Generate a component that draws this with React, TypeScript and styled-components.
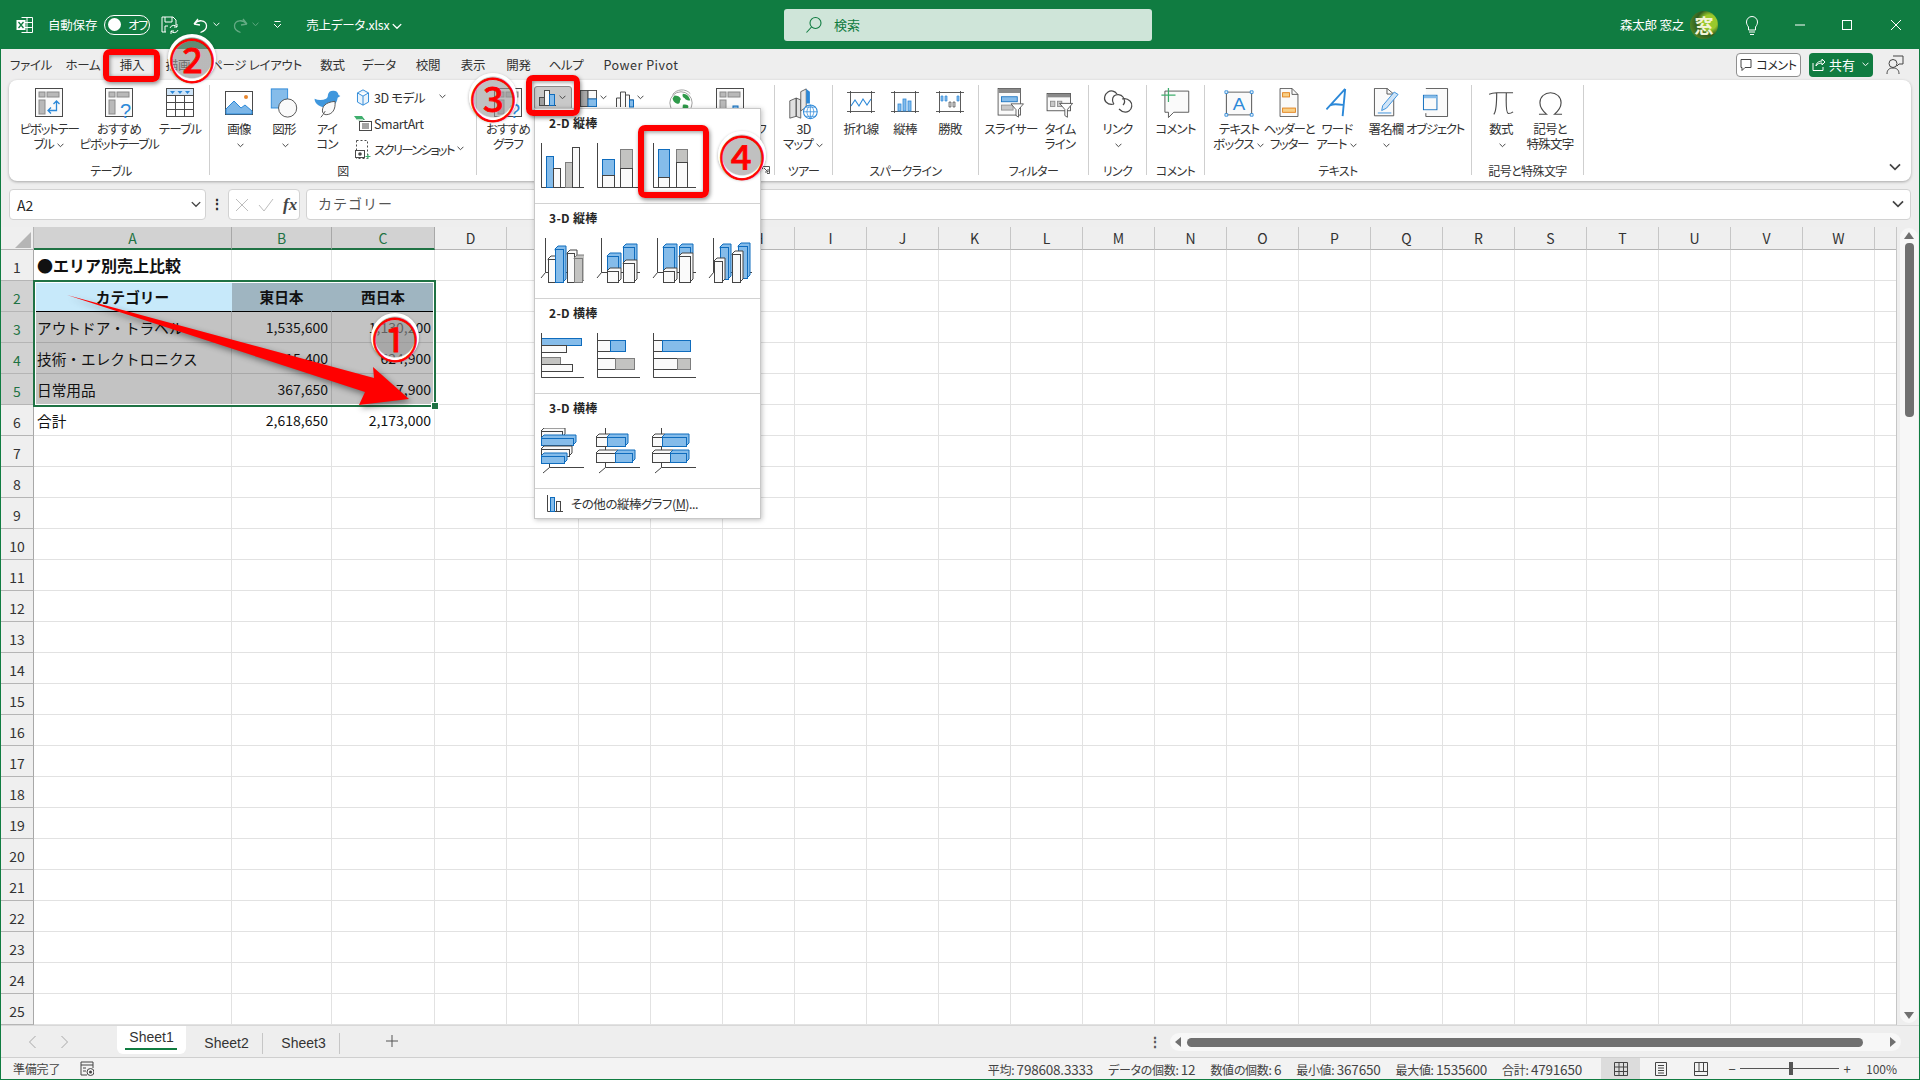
import * as React from 'react'
import styled, { createGlobalStyle } from 'styled-components'

const GlobalStyle = createGlobalStyle`
  html, body { margin: 0; padding: 0; background: #fff; }
  body { font-family: "Noto Sans CJK JP", "Noto Sans", sans-serif; color: #262626; }
`

const GREEN = '#107c41'

// ---------- small shared drawings ----------
const Chev = ({ c = '#444', w = 7 }: { c?: string; w?: number }) => (
  <ChevSvg width={w} height={w * 0.7} viewBox="0 0 7 5">
    <polyline points="0.5,0.8 3.5,3.8 6.5,0.8" fill="none" stroke={c} strokeWidth="1" />
  </ChevSvg>
)
const ChevSvg = styled.svg`
  display: inline-block;
  vertical-align: middle;
  margin: 0 1px 1px 3px;
`

const BLUE = '#2b88d8'
const INK = '#4a4a4a'

const PivotBase = ({ children }: { children?: React.ReactNode }) => (
  <svg width="30" height="30" viewBox="0 0 30 30">
    <rect x="1.5" y="0.5" width="27" height="28" fill="#fafafa" stroke={INK} />
    <rect x="5" y="4" width="6" height="5" fill="#b9b9b9" stroke="#8a8a8a" />
    <rect x="13" y="4" width="12" height="5" fill="#b9b9b9" stroke="#8a8a8a" />
    <rect x="5" y="12" width="6" height="14" fill="#b9b9b9" stroke="#8a8a8a" />
    {children}
  </svg>
)

const PivotIcon = () => (
  <PivotBase>
    <path d="M14 22.5h8.5V13M19.5 16l3-3 3 3M17 19.5l-3 3 3 3" fill="none" stroke={BLUE} strokeWidth="1.3" />
  </PivotBase>
)
const RecPivotIcon = () => (
  <PivotBase>
    <text x="16" y="30" fontSize="20" fill={BLUE} fontFamily="Liberation Sans">?</text>
  </PivotBase>
)
const TableIcon = () => (
  <svg width="30" height="30" viewBox="0 0 30 30">
    <rect x="1.5" y="0.5" width="27" height="28" fill="#fff" stroke={INK} />
    <rect x="2" y="1" width="26" height="6" fill="#cfe4f7" />
    <path d="M5 3h5l-2.5 3zM12.5 3h5L15 6zM20 3h5l-2.5 3z" fill={BLUE} />
    <path d="M1.5 7.5h27M1.5 14.5h27M1.5 21.5h27M10.5 7v22M19.5 7v22" stroke={INK} fill="none" />
  </svg>
)
const ImageIcon = () => (
  <svg width="30" height="30" viewBox="0 0 30 30">
    <rect x="1.5" y="3.5" width="27" height="23" fill="#fff" stroke={INK} />
    <path d="M2 26V21L10 13l7 7 4-3 7 6v3z" fill="#7db7e8" stroke="#2b88d8" />
    <circle cx="22" cy="9" r="2" fill="#e8862e" />
  </svg>
)
const ShapesIcon = () => (
  <svg width="28" height="30" viewBox="0 0 30 33">
    <rect x="1" y="1" width="18" height="21" fill="#85bcea" stroke="#2b88d8" />
    <circle cx="19" cy="22" r="10" fill="#fafafa" stroke={INK} />
  </svg>
)
const DuckIcon = () => (
  <svg width="28" height="32" viewBox="0 0 30 36">
    <path d="M22 3a6 6 0 0 1 6 5l2 1-3 2c-1 7-6 11-12 11C8 22 1 18 1 12c4 2 9 2 13 0 2-1 2-3 2-4a6 6 0 0 1 6-5z" fill="#3f97dd" />
    <path d="M8 33c2-2 3-4 5-7M10 27c-1-6 3-11 14-12 1 9-3 15-10 15-2 0-3-1-4-3z" fill="#fafafa" stroke={INK} />
  </svg>
)
const CubeIcon = () => (
  <svg width="14" height="17" viewBox="0 0 16 20">
    <path d="M8 1l6.500 3.600v10.800L8 19l-6.500-3.600V4.600zM1.500 4.600L8 8.400l6.500-3.800M8 8.400V19" fill="#eaf4fc" stroke="#2b88d8" strokeWidth="1.100" />
  </svg>
)
const SmartArtIcon = () => (
  <svg width="18" height="16" viewBox="0 0 18 16">
    <path d="M0 1h8l3 4H3z" fill="#3fae6d" />
    <path d="M2 4h7v2H5z" fill="#bfe3cd" />
    <rect x="5.500" y="6.500" width="12" height="9" fill="#fff" stroke={INK} />
    <path d="M8 9h7M8 11h7M8 13h7" stroke={INK} />
  </svg>
)
const ScreenshotIcon = () => (
  <svg width="16" height="21" viewBox="0 0 16 21">
    <rect x="1.500" y="1.500" width="11" height="18" fill="none" stroke={INK} strokeDasharray="2 2" />
    <rect x="0.500" y="11.500" width="9" height="7" fill="#fff" stroke={INK} />
    <circle cx="5" cy="15" r="1.800" fill={INK} />
    <path d="M13 15v5M10.500 17.500h5" stroke="#3fae6d" />
  </svg>
)
const MiniCol = () => (
  <svg width="17" height="17" viewBox="0 0 17 17">
    <path d="M.5 16.500H17" stroke={INK} fill="none" />
    <rect x="0.500" y="8.500" width="5" height="8" fill="#9f9f9f" stroke={INK} />
    <rect x="5.500" y="1.500" width="5" height="15" fill="#fafafa" stroke={INK} />
    <rect x="10.500" y="5.500" width="5" height="11" fill="#85bcea" stroke="#0f6cbd" />
  </svg>
)
const HierarchyIcon = () => (
  <svg width="17" height="17" viewBox="0 0 18 18">
    <rect x="0.500" y="0.500" width="8" height="17" fill="#a8a8a8" stroke={INK} />
    <rect x="8.500" y="0.500" width="9" height="9" fill="#fafafa" stroke={INK} />
    <rect x="8.500" y="9.500" width="9" height="8" fill="#85bcea" stroke="#0f6cbd" />
  </svg>
)
const WaterfallIcon = () => (
  <svg width="18" height="20" viewBox="0 0 18 20">
    <path d="M.5 19V10h4V4h5v3h4v5h4v7M4.500 19v-9M9.500 19V7M13.500 19v-7" fill="#fafafa" stroke={INK} />
    <rect x="13.500" y="12" width="4" height="7" fill="#85bcea" stroke="#0f6cbd" />
  </svg>
)
const GlobeIcon = () => (
  <svg width="26" height="28" viewBox="0 0 28 30">
    <circle cx="14" cy="16" r="12" fill="#fff" stroke="#9a9a9a" />
    <path d="M7 8c3 0 6 1 7 4-2 1 0 4-3 5-3 0-6-3-6-6zM16 6c4 0 7 3 8 7-2 1-5 0-6-2-2-1-3-3-2-5zM16 18c3-1 6 0 6 2s-3 5-5 5-1-5-1-7z" fill="#2e9a4a" />
    <path d="M5 7C9 1 19 0 24 6" fill="none" stroke="#9a9a9a" />
  </svg>
)
const PivotChartIcon = () => (
  <svg width="30" height="34" viewBox="0 0 30 34">
    <rect x="0.500" y="0.500" width="27" height="26" fill="#fafafa" stroke={INK} />
    <rect x="4" y="4" width="6" height="5" fill="#b9b9b9" stroke="#8a8a8a" />
    <rect x="12" y="4" width="12" height="5" fill="#b9b9b9" stroke="#8a8a8a" />
    <rect x="4" y="12" width="6" height="12" fill="#b9b9b9" stroke="#8a8a8a" />
    <rect x="17" y="18" width="5" height="14" fill="#85bcea" stroke="#0f6cbd" />
  </svg>
)
const MapIcon = () => (
  <svg width="31" height="32" viewBox="0 0 32 35">
    <path d="M1 14l7-3v20l-7 2zM8 11l5 2v20l-5-2z" fill="#e0e0e0" stroke={INK} strokeWidth="0.900" />
    <path d="M13 4l6-3v20l-6 4z" fill="#e8e8e8" stroke={INK} strokeWidth="0.900" />
    <path d="M19 1l4 3v13h-4z" fill="#2b88d8" />
    <circle cx="23.500" cy="26" r="7.500" fill="#fff" stroke={BLUE} strokeWidth="1.100" />
    <path d="M16 26h15M23.500 18.500v15M18 21h11M18 31h11M23.500 18.500c-5 5-5 10 0 15M23.500 18.500c5 5 5 10 0 15" fill="none" stroke={BLUE} strokeWidth="0.800" />
  </svg>
)
const SparkBase = ({ children }: { children: React.ReactNode }) => (
  <SparkSvg width="30" height="22" viewBox="0 0 30 22">
    <path d="M1 1.500h28M1 20.500h28M4.500 0v22M25.500 0v22" stroke={INK} fill="none" strokeWidth="0.900" />
    {children}
  </SparkSvg>
)
const SparkSvg = styled.svg`
  margin-top: 3px;
`
const SparkLineIcon = () => (
  <SparkBase>
    <polyline points="5,15 9,9 13,15 17,8 21,14 25,8" fill="none" stroke={BLUE} strokeWidth="1.100" />
  </SparkBase>
)
const SparkColIcon = () => (
  <SparkBase>
    <rect x="8" y="13" width="3" height="7" fill="#85bcea" stroke={BLUE} strokeWidth="0.800" />
    <rect x="13" y="8" width="3" height="12" fill="#85bcea" stroke={BLUE} strokeWidth="0.800" />
    <rect x="18" y="10" width="3" height="10" fill="#85bcea" stroke={BLUE} strokeWidth="0.800" />
  </SparkBase>
)
const SparkWinIcon = () => (
  <SparkBase>
    <path d="M6 5h2v5H6zM10 5h2v5h-2zM22 5h2v5h-2z" fill="#85bcea" stroke={BLUE} strokeWidth="0.700" />
    <path d="M14 11h2v5h-2zM18 11h2v5h-2z" fill="#ddd" stroke={INK} strokeWidth="0.700" />
  </SparkBase>
)
const SlicerIcon = () => (
  <svg width="30" height="30" viewBox="0 0 32 36">
    <rect x="0.500" y="0.500" width="27" height="32" fill="#fafafa" stroke={INK} />
    <rect x="1" y="1" width="26" height="5" fill="#8a8a8a" />
    <rect x="4.500" y="10.500" width="19" height="6" fill="#85bcea" stroke="#0f6cbd" />
    <rect x="4.500" y="20.500" width="14" height="6" fill="#c8c8c8" stroke="#8a8a8a" />
    <path d="M16 19h15l-6 7v9l-3-2v-7z" fill="#fff" stroke={INK} />
  </svg>
)
const TimelineIcon = () => (
  <TimelineSvg width="31" height="26" viewBox="0 0 32 30">
    <rect x="0.500" y="0.500" width="27" height="20" fill="#fafafa" stroke={INK} />
    <rect x="1" y="1" width="26" height="4" fill="#8a8a8a" />
    <rect x="4.500" y="9.500" width="5" height="6" fill="#c8c8c8" stroke="#8a8a8a" />
    <rect x="12.500" y="9.500" width="5" height="6" fill="#c8c8c8" stroke="#8a8a8a" />
    <path d="M15 12h15l-6 7v9l-3-2v-7z" fill="#fff" stroke={INK} />
  </TimelineSvg>
)
const TimelineSvg = styled.svg`
  margin-top: 5px;
`
const LinkIcon = () => (
  <svg width="30" height="28" viewBox="0 0 30 28">
    <path d="M14 6c-2-3-6-4-9-2S0 11 3 14c2 2 5 3 8 2M16 21c3 3 7 4 10 2s4-7 1-10c-2-2-5-3-8-2" fill="none" stroke={INK} strokeWidth="1.200" />
    <path d="M11 16c-2-2-2-6 0-8s7-2 9 1 2 6 0 8" fill="none" stroke={INK} strokeWidth="1.200" />
  </svg>
)
const CommentIcon = () => (
  <svg width="31" height="30" viewBox="0 0 32 34">
    <path d="M4 3.500h27v24H14l-6 6v-6H4z" fill="#fafafa" stroke={INK} />
    <path d="M8 0v16M0 8h16" stroke="#3fae6d" strokeWidth="1.400" />
  </svg>
)
const TextBoxIcon = () => (
  <TextBoxSvg width="30" height="27" viewBox="0 0 32 32" preserveAspectRatio="none">
    <rect x="2.500" y="2.500" width="27" height="27" fill="#fafafa" stroke={INK} />
    <path d="M1 1h3v3H1zM28 1h3v3h-3zM1 28h3v3H1zM28 28h3v3h-3z" fill="#fff" stroke={BLUE} />
    <text x="16" y="24" textAnchor="middle" fontSize="20" fill={BLUE} fontFamily="Liberation Sans">A</text>
  </TextBoxSvg>
)
const TextBoxSvg = styled.svg`
  margin-top: 2px;
`
const HeaderFooterIcon = () => (
  <svg width="22" height="29" viewBox="0 0 24 34">
    <path d="M1.500.5h14l7 7v26h-21z" fill="#fafafa" stroke={INK} />
    <path d="M15.500.5v7h7" fill="none" stroke={INK} />
    <rect x="4.500" y="5.500" width="8" height="5" fill="#f8cf86" stroke="#e07a10" />
    <rect x="4.500" y="23.500" width="15" height="5" fill="#f8cf86" stroke="#e07a10" />
  </svg>
)
const WordArtIcon = () => (
  <svg width="23" height="29" viewBox="0 0 26 34">
    <path d="M0 25L22 1M22 1l-3 32M5 20c4-2 9-1 15 0" fill="none" stroke={BLUE} strokeWidth="2.200" />
  </svg>
)
const SignatureIcon = () => (
  <svg width="27" height="29" viewBox="0 0 28 36" preserveAspectRatio="none">
    <path d="M1.500.5h13l7 7v27h-20z" fill="#fafafa" stroke={INK} />
    <path d="M14.500.5v7h7" fill="none" stroke={INK} />
    <path d="M22 5l4 3-12 17-5 3 1-6z" fill="#cfe4f7" stroke={BLUE} />
    <path d="M5 31h14" stroke={BLUE} />
  </svg>
)
const ObjectIcon = () => (
  <svg width="27" height="29" viewBox="0 0 28 34" preserveAspectRatio="none">
    <path d="M4 .5h22.500v33H4v-4" fill="#fafafa" stroke={INK} />
    <rect x="1.500" y="8.500" width="14" height="17" fill="#fafafa" stroke="#0f6cbd" />
    <rect x="2" y="9" width="13" height="3" fill="#85bcea" />
  </svg>
)
const PiIcon = () => (
  <PiSvg width="25" height="25" viewBox="0 0 26 30" preserveAspectRatio="none">
    <path d="M0 4c3-2 5-2 8-2h17M8 2C8 14 8 24 5 28M18 2c0 8-1 24 2 25 2 0 4-1 5-2" fill="none" stroke={INK} strokeWidth="1.200" />
  </PiSvg>
)
const PiSvg = styled.svg`
  margin-top: 3px;
`
const OmegaIcon = () => (
  <PiSvg width="25" height="25" viewBox="0 0 26 30" preserveAspectRatio="none">
    <path d="M1 28h8c-4-4-7-8-7-14C2 7 7 2 13 2s11 5 11 12c0 6-3 10-7 14h8" fill="none" stroke={INK} strokeWidth="1.200" />
  </PiSvg>
)

// ---------- chart gallery drawings ----------
type Kind = 'b' | 'w' | 'g'
type BarDef = [number, number, number, number, Kind]
const PAL: Record<Kind, { fill: string; stroke: string }> = {
  b: { fill: '#85bcea', stroke: '#0f6cbd' },
  w: { fill: '#fafafa', stroke: '#444' },
  g: { fill: '#c3c3c1', stroke: '#7d7d7d' },
}
const Bar = ({ bar, deep }: { bar: BarDef; deep?: boolean }) => {
  const [x, y, w, h, k] = bar
  const { fill, stroke } = PAL[k]
  const d = 3
  return (
    <g fill={fill} stroke={stroke}>
      {deep && <path d={`M${x} ${y}l${d} -${d}h${w}v${h}l-${d} ${d}z`} />}
      <rect x={x + 0.5} y={y + 0.5} width={w} height={h} />
    </g>
  )
}
const ChartIcon = ({ bars, mode }: { bars: BarDef[]; mode: '2d' | '3dv' | '3dh' }) => (
  <svg width="44" height="46" viewBox="0 0 44 46">
    {mode === '2d' && <path d="M1.500 0v44.500H44" fill="none" stroke="#444" />}
    {mode === '3dv' && <path d="M5.500 0v34.500H44M5.500 34.500L1 40" fill="none" stroke="#444" />}
    {mode === '3dh' && <path d="M9.500 0v39.500H44M9.500 39.500L3 45" fill="none" stroke="#444" />}
    {bars.map((b, i) => <Bar key={i} bar={b} deep={mode !== '2d'} />)}
    {mode === '2d' && <path d="M1.500 0v44.500" fill="none" stroke="#444" />}
  </svg>
)
const GALLERY: { title: string; mode: '2d' | '3dv' | '3dh'; icons: BarDef[][] }[] = [
  {
    title: '2-D 縦棒', mode: '2d', icons: [
      [[6, 13, 7, 31, 'b'], [13, 25, 7, 19, 'w'], [25, 19, 7, 25, 'g'], [32, 4, 7, 40, 'w']],
      [[6, 16, 12, 16, 'b'], [6, 32, 12, 12, 'w'], [24, 6, 12, 19, 'g'], [24, 25, 12, 19, 'w']],
      [[6, 6, 11, 28, 'b'], [6, 34, 11, 10, 'w'], [24, 6, 11, 13, 'g'], [24, 19, 11, 25, 'w']],
    ],
  },
  {
    title: '3-D 縦棒', mode: '3dv', icons: [
      [[8, 21, 7, 23, 'w'], [15, 11, 8, 33, 'b'], [27, 15, 7, 29, 'w'], [34, 20, 8, 24, 'g']],
      [[11, 18, 11, 15, 'b'], [11, 33, 11, 11, 'w'], [27, 9, 11, 16, 'b'], [27, 25, 11, 19, 'w']],
      [[11, 9, 11, 24, 'b'], [11, 33, 11, 11, 'w'], [27, 9, 11, 9, 'b'], [27, 18, 11, 26, 'w']],
      [[12, 9, 8, 32, 'b'], [6, 23, 8, 21, 'w'], [30, 8, 9, 32, 'b'], [24, 16, 8, 28, 'w']],
    ],
  },
  {
    title: '2-D 横棒', mode: '2d', icons: [
      [[1, 5, 40, 7, 'b'], [1, 12, 25, 7, 'w'], [1, 24, 19, 7, 'g'], [1, 31, 31, 7, 'w']],
      [[1, 7, 13, 11, 'w'], [14, 7, 15, 11, 'b'], [1, 25, 18, 11, 'w'], [19, 25, 19, 11, 'g']],
      [[1, 7, 9, 11, 'w'], [10, 7, 28, 11, 'b'], [1, 25, 24, 11, 'w'], [25, 25, 13, 11, 'g']],
    ],
  },
  {
    title: '3-D 横棒', mode: '3dh', icons: [
      [[1, 3, 21, 6, 'w'], [1, 10, 32, 7, 'b'], [1, 21, 28, 7, 'w'], [1, 28, 23, 7, 'b']],
      [[0, 9, 11, 9, 'w'], [11, 9, 18, 9, 'b'], [0, 25, 19, 9, 'w'], [19, 25, 17, 9, 'b']],
      [[0, 9, 10, 9, 'w'], [10, 9, 24, 9, 'b'], [0, 25, 18, 9, 'w'], [18, 25, 16, 9, 'b']],
    ],
  },
]

// ---------- sheet data ----------
const COLS = ['A', 'B', 'C', 'D', 'E', 'F', 'G', 'H', 'I', 'J', 'K', 'L', 'M', 'N', 'O', 'P', 'Q', 'R', 'S', 'T', 'U', 'V', 'W', '']
type CellDef = { t: string; right?: boolean; center?: boolean; bold?: boolean; big?: boolean }
const DATA: Record<string, CellDef> = {
  A1: { t: '●エリア別売上比較', bold: true, big: true },
  A2: { t: 'カテゴリー', center: true, bold: true },
  B2: { t: '東日本', center: true, bold: true },
  C2: { t: '西日本', center: true, bold: true },
  A3: { t: 'アウトドア・トラベル' },
  B3: { t: '1,535,600', right: true },
  C3: { t: '1,130,200', right: true },
  A4: { t: '技術・エレクトロニクス' },
  B4: { t: '715,400', right: true },
  C4: { t: '624,900', right: true },
  A5: { t: '日常用品' },
  B5: { t: '367,650', right: true },
  C5: { t: '417,900', right: true },
  A6: { t: '合計' },
  B6: { t: '2,618,650', right: true },
  C6: { t: '2,173,000', right: true },
}
const cellTone = (r: number, c: number) => {
  if (r === 2 && c === 0) return 'head'
  if (r === 2 && c <= 2) return 'headDark'
  if (r >= 3 && r <= 5 && c <= 2) return 'sel'
  return 'none'
}

const STATUS: [string, string][] = [
  ['平均:', '798608.3333'],
  ['データの個数:', '12'],
  ['数値の個数:', '6'],
  ['最小値:', '367650'],
  ['最大値:', '1535600'],
  ['合計:', '4791650'],
]

export default function App() {
  return (
    <Root>
      <GlobalStyle />
      <TitleBar>
        <TitleLeft>
          <svg width="18" height="18" viewBox="0 0 18 18">
            <path d="M5.500 1.500h11v15h-11M5.500 6.500h11M5.500 11.500h11M11 1.500v15" fill="none" stroke="#fff" />
            <rect x="0.500" y="4" width="9" height="10" fill="#fff" />
            <path d="M2.500 6l5 6M7.500 6l-5 6" stroke={GREEN} strokeWidth="1.300" />
          </svg>
          <TitleText $ml={14}>自動保存</TitleText>
          <Toggle><Knob /><ToggleText>オフ</ToggleText></Toggle>
          <QuickIcon $ml={10}>
            <svg width="20" height="20" viewBox="0 0 20 20">
              <path d="M6 17H2V2h11l3 3v5M5 2v5h7V2M5 17v-6h3" fill="none" stroke="#fff" />
              <path d="M10 13a4 4 0 0 1 7-1M18 15a4 4 0 0 1-7 1M17 9v3h-3M11 19v-3h3" fill="none" stroke="#fff" />
            </svg>
          </QuickIcon>
          <QuickIcon $ml={12}>
            <svg width="18" height="18" viewBox="0 0 18 18">
              <path d="M2 8l4-5M2 8l6 1M2.500 8C6 3 14 4 14.500 9.500c.3 3-2 5.500-6 7" fill="none" stroke="#fff" strokeWidth="1.300" />
            </svg>
            <Chev c="#fff" />
          </QuickIcon>
          <QuickIcon $ml={10} $dim>
            <svg width="18" height="18" viewBox="0 0 18 18">
              <path d="M16 8l-4-5M16 8l-6 1M15.500 8C12 3 4 4 3.500 9.500c-.3 3 2 5.500 6 7" fill="none" stroke="#fff" strokeWidth="1.300" />
            </svg>
            <Chev c="#fff" />
          </QuickIcon>
          <QuickIcon $ml={13}>
            <svg width="9" height="9" viewBox="0 0 9 9">
              <path d="M1.500 1.500h6M1 4l3.500 3.500L8 4" fill="none" stroke="#fff" />
            </svg>
          </QuickIcon>
          <TitleText $ml={24}>売上データ.xlsx<Chev c="#fff" w={10} /></TitleText>
        </TitleLeft>
        <SearchBox>
          <svg width="18" height="18" viewBox="0 0 18 18">
            <circle cx="10.500" cy="7" r="5.500" fill="none" stroke={GREEN} strokeWidth="1.100" />
            <path d="M6.500 11l-5 5.500" stroke={GREEN} strokeWidth="1.100" />
          </svg>
          <SearchText>検索</SearchText>
        </SearchBox>
        <TitleRight>
          <TitleText>森太郎 窓之</TitleText>
          <Avatar>窓</Avatar>
          <WinBtn $w={49} $ml={9}>
            <svg width="16" height="22" viewBox="0 0 16 22">
              <path d="M4.500 13C3 11 2.500 9.500 2.500 8a5.500 5.500 0 0 1 11 0c0 1.500-.5 3-2 5v3h-7zM5 18h6M6 20.500h4" fill="none" stroke="#fff" />
            </svg>
          </WinBtn>
          <WinBtn $w={47} $ml={0}><svg width="12" height="12" viewBox="0 0 12 12"><path d="M1 6h10" stroke="#fff" /></svg></WinBtn>
          <WinBtn $w={48} $ml={0}><svg width="12" height="12" viewBox="0 0 12 12"><rect x="1.500" y="1.500" width="9" height="9" fill="none" stroke="#fff" /></svg></WinBtn>
          <WinBtn $w={49} $ml={0}><svg width="12" height="12" viewBox="0 0 12 12"><path d="M1 1l10 10M11 1L1 11" stroke="#fff" /></svg></WinBtn>
        </TitleRight>
      </TitleBar>

      <TabRow>
        <Tab $w={56}>ファイル</Tab>
        <Tab $w={48}>ホーム</Tab>
        <Tab $w={50}>挿入</Tab>
        <Tab $w={42}>描画</Tab>
        <Tab $w={114}>ページ レイアウト</Tab>
        <Tab $w={39}>数式</Tab>
        <Tab $w={54}>データ</Tab>
        <Tab $w={44}>校閲</Tab>
        <Tab $w={46}>表示</Tab>
        <Tab $w={45}>開発</Tab>
        <Tab $w={50}>ヘルプ</Tab>
        <Tab $w={100} $ls={0.5}>Power Pivot</Tab>
        <TabRight>
          <CommentBtn>
            <svg width="12" height="12" viewBox="0 0 12 12"><path d="M1 .5h10v8H5l-3 3v-3H1z" fill="none" stroke="#444" /></svg>
            コメント
          </CommentBtn>
          <ShareBtn>
            <svg width="13" height="13" viewBox="0 0 13 13"><path d="M1 5v7.500h10V9M4 8c0-3 3-5 6-5V1l3 3-3 3V5C7 5 5 6 4 8z" fill="none" stroke="#fff" /></svg>
            共有<Chev c="#fff" />
          </ShareBtn>
          <svg width="18" height="20" viewBox="0 0 18 20">
            <circle cx="7" cy="8.500" r="4" fill="none" stroke="#444" />
            <path d="M1 19c0-4 2-6 6-6s6 2 6 6M7 1h10v8h-4l-2 2" fill="none" stroke="#444" />
          </svg>
        </TabRight>
      </TabRow>

      <Ribbon>
        <Group $w={201}>
          <GroupItems $pl={5}>
            <Large $w={70}><IconBox><PivotIcon /></IconBox><BtnText $tight>ピボットテー<br />ブル<Chev /></BtnText></Large>
            <Large $w={70}><IconBox><RecPivotIcon /></IconBox><BtnText>おすすめ<br /><Squeeze>ピボットテーブル</Squeeze></BtnText></Large>
            <Large $w={52}><IconBox><TableIcon /></IconBox><BtnText>テーブル</BtnText></Large>
          </GroupItems>
          <GroupLabel $pl={4}>テーブル</GroupLabel>
        </Group>
        <Group $w={267}>
          <GroupItems $pl={7}>
            <Large $w={44}><IconBox><ImageIcon /></IconBox><BtnText>画像<br /><Chev /></BtnText></Large>
            <Large $w={46}><IconBox><ShapesIcon /></IconBox><BtnText>図形<br /><Chev /></BtnText></Large>
            <Large $w={40}><IconBox><DuckIcon /></IconBox><BtnText>アイ<br />コン</BtnText></Large>
            <SmallCol>
              <SmallItem><SmallIcon><CubeIcon /></SmallIcon>3D モデル<Gap /><Chev /></SmallItem>
              <SmallItem><SmallIcon><SmartArtIcon /></SmallIcon>SmartArt</SmallItem>
              <SmallItem $ls={-1.8}><SmallIcon><ScreenshotIcon /></SmallIcon>スクリーンショット<Chev /></SmallItem>
            </SmallCol>
          </GroupItems>
          <GroupLabel>図</GroupLabel>
        </Group>
        <Group $w={298}>
          <GroupItems $pl={4}>
            <Large $w={54}><IconBox><RecPivotIcon /></IconBox><BtnText>おすすめ<br />グラフ</BtnText></Large>
            <ChartRow>
              <ActiveChart><MiniCol /><Chev /></ActiveChart>
              <ChartChip><HierarchyIcon /><Chev /></ChartChip>
              <ChartChip><WaterfallIcon /><Chev /></ChartChip>
            </ChartRow>
            <Large $w={36}><IconBox><GlobeIcon /></IconBox><BtnText>マップ</BtnText></Large>
            <Large $w={64}><IconBox><PivotChartIcon /></IconBox><BtnText>ピボットグラフ</BtnText></Large>
          </GroupItems>
          <GroupLabel>グラフ</GroupLabel>
          <Launcher>
            <svg width="8" height="8" viewBox="0 0 8 8"><path d="M.5 3V.5H7.500V7.500H5M2 2l4 4M3 6h3V3" fill="none" stroke="#555" /></svg>
          </Launcher>
        </Group>
        <Group $w={58}>
          <GroupItems $pl={0}>
            <Large $w={57}><IconBox><MapIcon /></IconBox><BtnText>3D<br />マップ<Chev /></BtnText></Large>
          </GroupItems>
          <GroupLabel>ツアー</GroupLabel>
        </Group>
        <Group $w={146}>
          <GroupItems $pl={6}>
            <Large $w={44}><IconBox><SparkLineIcon /></IconBox><BtnText>折れ線</BtnText></Large>
            <Large $w={44}><IconBox><SparkColIcon /></IconBox><BtnText>縦棒</BtnText></Large>
            <Large $w={46}><IconBox><SparkWinIcon /></IconBox><BtnText>勝敗</BtnText></Large>
          </GroupItems>
          <GroupLabel>スパークライン</GroupLabel>
        </Group>
        <Group $w={110}>
          <GroupItems $pl={6}>
            <Large $w={52}><IconBox><SlicerIcon /></IconBox><BtnText>スライサー</BtnText></Large>
            <Large $w={46}><IconBox><TimelineIcon /></IconBox><BtnText>タイム<br />ライン</BtnText></Large>
          </GroupItems>
          <GroupLabel>フィルター</GroupLabel>
        </Group>
        <Group $w={58}>
          <GroupItems $pl={0}>
            <Large $w={57}><IconBox><LinkIcon /></IconBox><BtnText>リンク<br /><Chev /></BtnText></Large>
          </GroupItems>
          <GroupLabel>リンク</GroupLabel>
        </Group>
        <Group $w={58}>
          <GroupItems $pl={0}>
            <Large $w={57}><IconBox><CommentIcon /></IconBox><BtnText>コメント</BtnText></Large>
          </GroupItems>
          <GroupLabel>コメント</GroupLabel>
        </Group>
        <Group $w={267}>
          <GroupItems $pl={9}>
            <Large $w={50}><IconBox><TextBoxIcon /></IconBox><BtnText>テキスト<br />ボックス<Chev /></BtnText></Large>
            <Large $w={50}><IconBox><HeaderFooterIcon /></IconBox><BtnText $tight>ヘッダーと<br />フッター</BtnText></Large>
            <Large $w={46}><IconBox><WordArtIcon /></IconBox><BtnText>ワード<br />アート<Chev /></BtnText></Large>
            <Large $w={52}><IconBox><SignatureIcon /></IconBox><BtnText>署名欄<br /><Chev /></BtnText></Large>
            <Large $w={46}><IconBox><ObjectIcon /></IconBox><BtnText $tight>オブジェクト</BtnText></Large>
          </GroupItems>
          <GroupLabel>テキスト</GroupLabel>
        </Group>
        <Group $w={112}>
          <GroupItems $pl={6}>
            <Large $w={46}><IconBox><PiIcon /></IconBox><BtnText>数式<br /><Chev /></BtnText></Large>
            <Large $w={52}><IconBox><OmegaIcon /></IconBox><BtnText>記号と<br />特殊文字</BtnText></Large>
          </GroupItems>
          <GroupLabel>記号と特殊文字</GroupLabel>
        </Group>
        <Collapse><Chev w={12} /></Collapse>
      </Ribbon>

      <FormulaRow>
        <NameBox>A2<Chev w={10} /></NameBox>
        <Dots>⋮</Dots>
        <FxBox>
          <svg width="14" height="14" viewBox="0 0 14 14"><path d="M1 1l12 12M13 1L1 13" stroke="#bdbdbd" /></svg>
          <svg width="16" height="14" viewBox="0 0 16 14"><path d="M1 7l5 6L15 1" fill="none" stroke="#bdbdbd" /></svg>
          <FxText>fx</FxText>
        </FxBox>
        <FormulaInput><FormulaText>カテゴリー</FormulaText><FormulaChev><Chev w={12} /></FormulaChev></FormulaInput>
      </FormulaRow>

      <SheetArea>
        <GridWrap>
          <Grid>
            <Corner><svg width="16" height="16" viewBox="0 0 16 16"><path d="M16 0v16H0z" fill="#b5b5b5" /></svg></Corner>
            {COLS.map((c, i) => <ColHead key={c + i} $sel={i <= 2}>{c}</ColHead>)}
            {Array.from({ length: 25 }, (_, ri) => {
              const r = ri + 1
              return (
                <React.Fragment key={r}>
                  <RowHead $sel={r >= 2 && r <= 5}>{r}</RowHead>
                  {COLS.map((c, ci) => {
                    const d = DATA[c + r]
                    return (
                      <Cell key={ci} $tone={cellTone(r, ci)} $right={d?.right} $center={d?.center} $bold={d?.bold} $big={d?.big}>
                        {d?.t}
                      </Cell>
                    )
                  })}
                </React.Fragment>
              )
            })}
          </Grid>
          <Selection><Handle /></Selection>
        </GridWrap>
        <VScroll>
          <VTrack>
            <ScrollUp />
            <VThumb />
            <ScrollGap />
            <ScrollDown />
          </VTrack>
        </VScroll>
      </SheetArea>

      <SheetTabs>
        <NavArrows>
          <svg width="9" height="14" viewBox="0 0 9 14"><path d="M7.500 1l-6 6 6 6" fill="none" stroke="#a8a8a8" /></svg>
          <svg width="9" height="14" viewBox="0 0 9 14"><path d="M1.500 1l6 6-6 6" fill="none" stroke="#a8a8a8" /></svg>
        </NavArrows>
        <ActiveSheet>Sheet1</ActiveSheet>
        <SheetName>Sheet2</SheetName>
        <SheetName>Sheet3</SheetName>
        <AddSheet>
          <svg width="12" height="12" viewBox="0 0 12 12"><path d="M6 0v12M0 6h12" stroke="#555" /></svg>
        </AddSheet>
        <HScrollDots>⋮</HScrollDots>
        <HScroll>
          <ArrowLeft />
          <HThumb />
          <ArrowRight />
        </HScroll>
      </SheetTabs>

      <StatusBar>
        <StatusLeft>準備完了</StatusLeft>
        <svg width="14" height="15" viewBox="0 0 14 15">
          <path d="M13 7V1H1v13h6M1 4h12M3 7h3M3 10h3" fill="none" stroke="#444" />
          <circle cx="10.500" cy="11" r="3.500" fill="none" stroke="#444" />
          <circle cx="10.500" cy="11" r="1.500" fill="#444" />
        </svg>
        <StatusStats>
          {STATUS.map(([k, v]) => <Stat key={k}>{k} <StatValue>{v}</StatValue></Stat>)}
        </StatusStats>
        <ViewBtn $on>
          <svg width="14" height="14" viewBox="0 0 14 14"><path d="M.5.5h13v13H.5zM.5 5h13M.5 9.500h13M5 .5v13M9.500.5v13" fill="none" stroke="#444" /></svg>
        </ViewBtn>
        <ViewBtn>
          <svg width="12" height="14" viewBox="0 0 12 14"><path d="M.5.5h11v13H.5zM3 3.500h6M3 6h6M3 8.500h6M3 11h6" fill="none" stroke="#444" /></svg>
        </ViewBtn>
        <ViewBtn>
          <svg width="14" height="14" viewBox="0 0 14 14"><path d="M.5.5h13v13H.5zM.5 9.500h13M5 .5v9M9.500.5v9" fill="none" stroke="#444" /></svg>
        </ViewBtn>
        <Zoomer>
          <ZoomSign>−</ZoomSign>
          <Slider><SliderThumb /></Slider>
          <ZoomSign>+</ZoomSign>
          <ZoomPct>100%</ZoomPct>
        </Zoomer>
      </StatusBar>

      <ChartMenu>
        {GALLERY.map(g => (
          <MenuSection key={g.title}>
            <MenuHead>{g.title}</MenuHead>
            <MenuIcons>
              {g.icons.map((bars, i) => <ChartIcon key={i} bars={bars} mode={g.mode} />)}
            </MenuIcons>
          </MenuSection>
        ))}
        <MenuFoot>
          <svg width="17" height="17" viewBox="0 0 17 17">
            <path d="M1.500 0v16.500H17" fill="none" stroke="#444" />
            <rect x="4.500" y="2.500" width="4" height="14" fill="#85bcea" stroke="#0f6cbd" />
            <rect x="10.500" y="6.500" width="4" height="10" fill="#fafafa" stroke="#444" />
          </svg>
          <span>その他の縦棒グラフ(<u>M</u>)...</span>
        </MenuFoot>
      </ChartMenu>

      <ArrowMark width="360" height="125" viewBox="0 0 360 125">
        <polygon points="6,5 313,88 312,77 348,109 298,115 304,102" fill="#ff0000" />
      </ArrowMark>
      <RedBox $x={102} $y={49} $w={57} $h={33} />
      <RedBox $x={525} $y={75} $w={54} $h={41} />
      <RedBox $x={637} $y={125} $w={71} $h={73} />
      <Badge $x={394} $y={337}>①</Badge>
      <Badge $x={191} $y={58}>②</Badge>
      <Badge $x={492} $y={97}>③</Badge>
      <Badge $x={741} $y={155}>④</Badge>
    </Root>
  )
}

// ---------- page ----------
const Root = styled.div`
  position: relative;
  width: 1920px;
  height: 1080px;
  overflow: hidden;
  display: flex;
  flex-direction: column;
  background: #eeeeee;
  font-size: 12.5px;
  font-feature-settings: "palt";
  box-sizing: border-box;
  border-bottom: 1px solid ${GREEN};
  border-left: 1px solid ${GREEN};
  border-right: 1px solid ${GREEN};
`

// ---------- title bar ----------
const TitleBar = styled.div`
  height: 49px;
  flex: none;
  margin: 0 -1px;
  background: ${GREEN};
  color: #fff;
  display: flex;
  align-items: center;
  position: relative;
`
const TitleLeft = styled.div`
  display: flex;
  align-items: center;
  padding-left: 16px;
  width: 784px;
  box-sizing: border-box;
`
const TitleText = styled.span<{ $ml?: number }>`
  margin-left: ${p => p.$ml ?? 0}px;
  font-size: 12.5px;
  white-space: nowrap;
  letter-spacing: -0.2px;
`
const Toggle = styled.div`
  width: 46px;
  height: 20px;
  margin-left: 7px;
  box-sizing: border-box;
  border: 1px solid #fff;
  border-radius: 10px;
  display: flex;
  align-items: center;
  padding-left: 3px;
`
const Knob = styled.div`
  width: 13px;
  height: 13px;
  border-radius: 50%;
  background: #fff;
`
const ToggleText = styled.span`
  margin-left: 7px;
  font-size: 12px;
  letter-spacing: -1px;
`
const QuickIcon = styled.span<{ $ml: number; $dim?: boolean }>`
  display: inline-flex;
  align-items: center;
  margin-left: ${p => p.$ml}px;
  opacity: ${p => (p.$dim ? 0.35 : 1)};
`
const SearchBox = styled.div`
  width: 368px;
  height: 32px;
  background: #cfe5d9;
  border-radius: 3px;
  display: flex;
  align-items: center;
  padding-left: 21px;
  box-sizing: border-box;
  color: ${GREEN};
`
const SearchText = styled.span`
  margin-left: 11px;
  font-size: 13px;
`
const TitleRight = styled.div`
  margin-left: auto;
  display: flex;
  align-items: center;
`
const Avatar = styled.div`
  width: 28px;
  height: 28px;
  margin-left: 6px;
  border-radius: 50%;
  background: radial-gradient(circle at 70% 40%, #9ac92c 0 28%, #2f5e22 50%, #6da226 100%);
  color: #f3f3d8;
  font-size: 19px;
  font-weight: 700;
  line-height: 28px;
  text-align: center;
`
const WinBtn = styled.div<{ $w: number; $ml: number }>`
  width: ${p => p.$w}px;
  margin-left: ${p => p.$ml}px;
  display: flex;
  justify-content: center;
  align-items: center;
`

// ---------- tabs ----------
const TabRow = styled.div`
  height: 31px;
  flex: none;
  display: flex;
  align-items: center;
  padding-left: 2px;
  background: #eeeeee;
`
const Tab = styled.div<{ $w: number; $ls?: number }>`
  width: ${p => p.$w}px;
  flex: none;
  text-align: center;
  font-size: 12.5px;
  white-space: nowrap;
  letter-spacing: ${p => p.$ls ?? -0.3}px;
  color: #333;
`
const TabRight = styled.div`
  margin-left: auto;
  display: flex;
  align-items: center;
  padding-right: 15px;
  gap: 8px;
`
const CommentBtn = styled.div`
  width: 65px;
  height: 24px;
  box-sizing: border-box;
  background: #fff;
  border: 1px solid #8f8f8f;
  border-radius: 4px;
  display: flex;
  align-items: center;
  justify-content: center;
  gap: 4px;
  font-size: 12px;
  letter-spacing: -0.4px;
`
const ShareBtn = styled.div`
  width: 64px;
  height: 24px;
  margin-right: 5px;
  box-sizing: border-box;
  background: ${GREEN};
  color: #fff;
  border-radius: 4px;
  display: flex;
  align-items: center;
  justify-content: center;
  gap: 4px;
  font-size: 13px;
`

// ---------- ribbon ----------
const Ribbon = styled.div`
  height: 101px;
  flex: none;
  margin: 0 8px;
  padding-top: 5px;
  box-sizing: border-box;
  background: #fff;
  border-radius: 8px;
  box-shadow: 0 1px 3px rgba(0, 0, 0, 0.3);
  display: flex;
  align-items: flex-start;
  position: relative;
`
const Group = styled.div<{ $w: number }>`
  width: ${p => p.$w}px;
  height: 90px;
  flex: none;
  box-sizing: border-box;
  border-right: 1px solid #cfcfcf;
  display: flex;
  flex-direction: column;
  position: relative;
`
const GroupItems = styled.div<{ $pl: number }>`
  flex: 1;
  display: flex;
  align-items: flex-start;
  padding-left: ${p => p.$pl}px;
`
const GroupLabel = styled.div<{ $pl?: number }>`
  height: 15px;
  line-height: 15px;
  margin-bottom: -3px;
  padding-left: ${p => p.$pl ?? 0}px;
  text-align: center;
  font-size: 12px;
  letter-spacing: -0.6px;
  color: #333;
  white-space: nowrap;
`
const Large = styled.div<{ $w: number }>`
  width: ${p => p.$w}px;
  flex: none;
  display: flex;
  flex-direction: column;
  align-items: center;
`
const IconBox = styled.div`
  height: 36px;
  box-sizing: border-box;
  display: flex;
  align-items: flex-start;
  justify-content: center;
  padding-top: 3px;
`
const BtnText = styled.div<{ $tight?: boolean }>`
  font-size: 12.5px;
  line-height: 15px;
  letter-spacing: ${p => (p.$tight ? '-1.3px' : '-0.8px')};
  color: #333;
  text-align: center;
  white-space: nowrap;
`
const Squeeze = styled.span`
  letter-spacing: -1.2px;
`
const SmallCol = styled.div`
  display: flex;
  flex-direction: column;
  gap: 2px;
  margin-left: 5px;
`
const SmallItem = styled.div<{ $ls?: number }>`
  height: 24px;
  display: flex;
  align-items: center;
  white-space: nowrap;
  font-size: 12.5px;
  letter-spacing: ${p => p.$ls ?? -0.4}px;
  color: #333;
`
const SmallIcon = styled.span`
  width: 22px;
  display: inline-flex;
  justify-content: center;
`
const Gap = styled.span`
  width: 11px;
`
const ChartRow = styled.div`
  width: 128px;
  flex: none;
  display: flex;
  align-items: center;
`
const ChartChip = styled.div`
  display: flex;
  align-items: center;
  margin-top: 1px;
  margin-left: 8px;
  height: 24px;
`
const ActiveChart = styled.div`
  width: 38px;
  height: 24px;
  box-sizing: border-box;
  margin-left: -1px;
  background: #c9c9c9;
  border: 1px solid #8a8a8a;
  border-radius: 3px;
  display: flex;
  align-items: center;
  justify-content: center;
`
const Launcher = styled.div`
  position: absolute;
  right: 4px;
  bottom: 1px;
  line-height: 0;
`
const Collapse = styled.div`
  position: absolute;
  right: 9px;
  bottom: 6px;
`

// ---------- formula bar ----------
const FormulaRow = styled.div`
  flex: none;
  height: 31px;
  margin: 8px 8px 7px 8px;
  display: flex;
  align-items: stretch;
`
const whiteBox = `
  background: #fff;
  border: 1px solid #d2d2d2;
  border-radius: 4px;
  box-sizing: border-box;
`
const NameBox = styled.div`
  ${whiteBox}
  width: 197px;
  display: flex;
  align-items: center;
  justify-content: space-between;
  padding: 0 3px 0 7px;
  font-size: 14px;
`
const Dots = styled.div`
  width: 22px;
  text-align: center;
  line-height: 29px;
  font-size: 14px;
  font-weight: 700;
`
const FxBox = styled.div`
  ${whiteBox}
  width: 72px;
  display: flex;
  align-items: center;
  padding-left: 6px;
  gap: 9px;
`
const FxText = styled.span`
  font-family: "Liberation Serif", serif;
  font-style: italic;
  font-weight: 700;
  font-size: 17px;
  color: #444;
`
const FormulaInput = styled.div`
  ${whiteBox}
  flex: 1;
  margin-left: 6px;
  display: flex;
  align-items: center;
  justify-content: space-between;
  padding: 0 5px 0 11px;
  font-size: 14px;
  font-feature-settings: normal;
  letter-spacing: 1px;
  color: #555;
`
const FormulaText = styled.span`
  margin-bottom: 3px;
`
const FormulaChev = styled.span`
  line-height: 0;
`

// ---------- sheet ----------
const SheetArea = styled.div`
  flex: none;
  height: 798px;
  display: flex;
  background: #eeeeee;
`
const GridWrap = styled.div`
  position: relative;
  flex: 1;
  min-width: 0;
  overflow: hidden;
  background: #fff;
  border-right: 1px solid #c6c6c6;
`
const Grid = styled.div`
  display: grid;
  grid-template-columns: 33px 198px 100px 103px repeat(20, 72px) 40px;
  grid-template-rows: 23px repeat(25, 31px);
  font-feature-settings: normal;
`
const Corner = styled.div`
  background: #efefef;
  border-right: 1px solid #b5b5b5;
  border-bottom: 1px solid #b5b5b5;
  display: flex;
  align-items: flex-end;
  justify-content: flex-end;
  padding: 0 2px 1px 0;
  box-sizing: border-box;
`
const ColHead = styled.div<{ $sel?: boolean }>`
  box-sizing: border-box;
  background: ${p => (p.$sel ? '#d2d2d2' : '#efefef')};
  color: ${p => (p.$sel ? '#1f7244' : '#333')};
  border-right: 1px solid ${p => (p.$sel ? '#a8a8a8' : '#c6c6c6')};
  border-bottom: ${p => (p.$sel ? '2px solid #1f7244' : '1px solid #b5b5b5')};
  text-align: center;
  line-height: 22px;
  font-size: 14px;
`
const RowHead = styled.div<{ $sel?: boolean }>`
  box-sizing: border-box;
  background: ${p => (p.$sel ? '#d2d2d2' : '#efefef')};
  color: ${p => (p.$sel ? '#1f7244' : '#333')};
  border-right: 1px solid #a8a8a8;
  border-bottom: 1px solid #b5b5b5;
  text-align: center;
  padding-top: 3px;
  line-height: 28px;
  font-size: 14px;
`
const TONES: Record<string, string> = { head: '#c7e9fa', headDark: '#9fb5c1', sel: '#c3c3c3', none: '#fff' }
const Cell = styled.div<{ $tone: string; $right?: boolean; $center?: boolean; $bold?: boolean; $big?: boolean }>`
  box-sizing: border-box;
  min-width: 0;
  padding: 0 3px;
  display: flex;
  align-items: center;
  justify-content: ${p => (p.$right ? 'flex-end' : p.$center ? 'center' : 'flex-start')};
  background: ${p => TONES[p.$tone]};
  border-right: 1px solid ${p => (p.$tone === 'none' ? '#e2e2e2' : p.$tone === 'sel' ? '#a8a8a8' : 'transparent')};
  border-bottom: 1px solid ${p => (p.$tone === 'none' ? '#e2e2e2' : p.$tone === 'sel' ? '#a8a8a8' : '#000')};
  font-size: ${p => (p.$big ? '16px' : p.$right ? '14px' : '14.67px')};
  font-weight: ${p => (p.$bold ? 700 : 400)};
  color: #111;
  white-space: nowrap;
`
const Selection = styled.div`
  position: absolute;
  left: 32px;
  top: 53px;
  width: 403px;
  height: 127px;
  box-sizing: border-box;
  border: 2px solid #1f7244;
  box-shadow: inset 0 0 0 1px #fff;
  pointer-events: none;
`
const Handle = styled.div`
  position: absolute;
  right: -5px;
  bottom: -5px;
  width: 8px;
  height: 8px;
  box-sizing: border-box;
  background: #1f7244;
  border: 1px solid #fff;
`
const VScroll = styled.div`
  width: 22px;
  flex: none;
  padding: 1px 1px 0 3px;
  box-sizing: border-box;
`
const VTrack = styled.div`
  height: 795px;
  border-radius: 9px;
  background: #f7f7f7;
  display: flex;
  flex-direction: column;
  align-items: center;
`
const ScrollUp = styled.div`
  margin-top: 4px;
  width: 0;
  height: 0;
  border: 5px solid transparent;
  border-top: none;
  border-bottom: 7px solid #707070;
`
const VThumb = styled.div`
  width: 9px;
  height: 174px;
  margin-top: 4px;
  background: #707070;
  border-radius: 4px;
`
const ScrollGap = styled.div`
  flex: 1;
`
const ScrollDown = styled.div`
  margin-bottom: 4px;
  width: 0;
  height: 0;
  border: 5px solid transparent;
  border-bottom: none;
  border-top: 7px solid #707070;
`

// ---------- sheet tabs ----------
const SheetTabs = styled.div`
  height: 32px;
  flex: none;
  display: flex;
  align-items: flex-start;
  background: #eeeeee;
  border-top: 1px solid #d8d8d8;
  box-sizing: border-box;
`
const NavArrows = styled.div`
  width: 116px;
  height: 31px;
  flex: none;
  display: flex;
  align-items: center;
  padding-left: 27px;
  gap: 23px;
  box-sizing: border-box;
`
const ActiveSheet = styled.div`
  width: 69px;
  height: 28px;
  box-sizing: border-box;
  background: #fff;
  border-radius: 0 0 6px 6px;
  font-family: "Liberation Sans", sans-serif;
  font-size: 14px;
  text-align: center;
  line-height: 22px;
  color: #333;
  position: relative;
  &::after {
    content: "";
    position: absolute;
    left: 8px;
    right: 9px;
    top: 22px;
    height: 2px;
    background: ${GREEN};
  }
`
const SheetName = styled.div`
  width: 77px;
  height: 21px;
  margin-top: 7px;
  box-sizing: border-box;
  border-right: 1px solid #c6c6c6;
  font-family: "Liberation Sans", sans-serif;
  font-size: 14px;
  text-align: center;
  line-height: 21px;
  padding-left: 5px;
  color: #333;
`
const AddSheet = styled.div`
  margin: 9px 0 0 46px;
  line-height: 0;
`
const HScrollDots = styled.div`
  margin: 5px 7px 0 auto;
  width: 16px;
  text-align: center;
  font-size: 14px;
  font-weight: 700;
  color: #555;
`
const HScroll = styled.div`
  width: 731px;
  height: 18px;
  margin: 7px 18px 0 0;
  border-radius: 9px;
  background: #f7f7f7;
  display: flex;
  align-items: center;
  padding: 0 5px;
  box-sizing: border-box;
`
const ArrowLeft = styled.div`
  width: 0;
  height: 0;
  border: 5px solid transparent;
  border-left: none;
  border-right: 6px solid #707070;
`
const ArrowRight = styled.div`
  width: 0;
  height: 0;
  border: 5px solid transparent;
  border-right: none;
  border-left: 6px solid #707070;
  margin-left: auto;
`
const HThumb = styled.div`
  width: 676px;
  height: 9px;
  margin-left: 6px;
  border-radius: 5px;
  background: #707070;
`

// ---------- status bar ----------
const StatusBar = styled.div`
  flex: 1;
  display: flex;
  align-items: center;
  background: #f3f3f3;
  border-top: 1px solid #cfcfcf;
  box-sizing: border-box;
  font-size: 12px;
  color: #444;
`
const StatusLeft = styled.div`
  margin: 0 20px 0 12px;
  letter-spacing: -0.2px;
`
const StatusStats = styled.div`
  margin-left: auto;
  display: flex;
  align-items: baseline;
  gap: 15px;
  padding-right: 19px;
`
const Stat = styled.span`
  white-space: nowrap;
  letter-spacing: -0.3px;
`
const StatValue = styled.span`
  font-size: 13.5px;
  letter-spacing: -0.2px;
`
const ViewBtn = styled.div<{ $on?: boolean }>`
  width: 39px;
  height: 100%;
  margin-right: 1px;
  background: ${p => (p.$on ? '#dcdcdc' : 'transparent')};
  display: flex;
  align-items: center;
  justify-content: center;
`
const Zoomer = styled.div`
  display: flex;
  align-items: center;
  margin-left: 3px;
  padding-right: 21px;
`
const ZoomSign = styled.span`
  width: 16px;
  text-align: center;
  font-size: 13px;
`
const Slider = styled.div`
  width: 99px;
  height: 1px;
  background: #555;
  position: relative;
`
const SliderThumb = styled.div`
  position: absolute;
  left: 49px;
  top: -6px;
  width: 4px;
  height: 13px;
  background: #555;
`
const ZoomPct = styled.span`
  margin-left: 11px;
  width: 32px;
`

// ---------- chart dropdown ----------
const ChartMenu = styled.div`
  position: absolute;
  left: 533px;
  top: 108px;
  width: 227px;
  height: 411px;
  box-sizing: border-box;
  background: #fff;
  border: 1px solid #c8c8c8;
  box-shadow: 1px 1px 5px rgba(0, 0, 0, 0.25);
  display: flex;
  flex-direction: column;
`
const MenuSection = styled.div`
  height: 95px;
  flex: none;
  box-sizing: border-box;
  padding-top: 4px;
  border-bottom: 1px solid #d2d2d2;
`
const MenuHead = styled.div`
  height: 20px;
  line-height: 20px;
  padding-left: 14px;
  font-size: 12px;
  font-weight: 700;
  letter-spacing: 0.3px;
  color: #262626;
`
const MenuIcons = styled.div`
  margin-top: 10px;
  padding-left: 5px;
  display: flex;
  gap: 12px;
`
const MenuFoot = styled.div`
  flex: 1;
  display: flex;
  align-items: center;
  padding-left: 11px;
  gap: 8px;
  font-size: 12.5px;
  letter-spacing: -0.5px;
  color: #333;
`

// ---------- red annotations ----------
const ArrowMark = styled.svg`
  position: absolute;
  left: 60px;
  top: 290px;
  filter: drop-shadow(2px 3px 3px rgba(0, 0, 0, 0.45));
`
const RedBox = styled.div<{ $x: number; $y: number; $w: number; $h: number }>`
  position: absolute;
  left: ${p => p.$x}px;
  top: ${p => p.$y}px;
  width: ${p => p.$w}px;
  height: ${p => p.$h}px;
  box-sizing: border-box;
  border: 6px solid #ff0000;
  border-radius: 7px;
  box-shadow: 1px 2px 4px rgba(0, 0, 0, 0.45), inset 1px 1px 4px rgba(0, 0, 0, 0.45);
`
const Badge = styled.div<{ $x: number; $y: number }>`
  position: absolute;
  left: ${p => p.$x - 24}px;
  top: ${p => p.$y - 24}px;
  width: 48px;
  height: 48px;
  border-radius: 50%;
  background: radial-gradient(circle, rgba(150, 150, 150, 0.6) 0 58%, #fff 62%);
  box-shadow: 0 1px 3px rgba(0, 0, 0, 0.35);
  color: #ff0000;
  font-size: 46px;
  line-height: 48px;
  text-align: center;
  font-feature-settings: normal;
  -webkit-text-stroke: 0.8px #ff0000;
`
